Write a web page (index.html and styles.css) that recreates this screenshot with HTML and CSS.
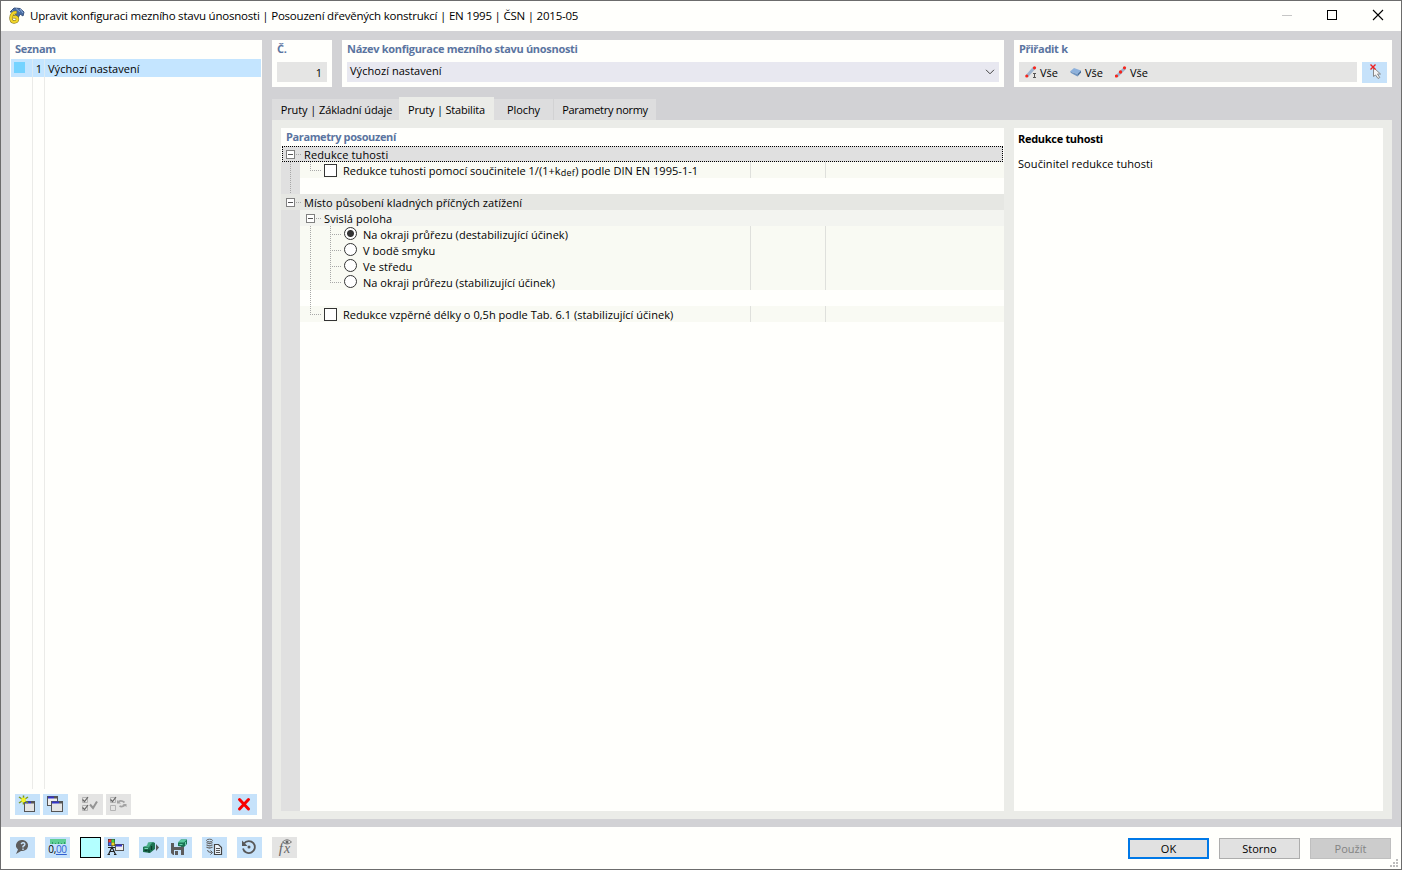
FILE: index.html
```html
<!DOCTYPE html>
<html lang="cs">
<head>
    <meta charset="UTF-8">
    <title>Upravit konfiguraci mezního stavu únosnosti</title>
    <link rel="stylesheet" href="styles.css">
</head>
<body>
    <div class="window">
        <header class="titlebar">
            <svg class="app-icon" width="17" height="17" viewBox="0 0 17 17">
                <path d="M2 5 L6 1 L12 1.500 L16 5 L15 9 L12 7 L10 11 L6 5 Z" fill="#4a6da3" stroke="#3a5580"/>
                <path d="M4 3.500 L8 6 M8 1.500 L12 5 M12 2 L15 6" stroke="#8fb0dc"/>
                <path d="M8.500 5.500 Q3.500 5 3 11 Q3 15 6 15 Q9.500 15 9.500 12 Q9 9 5 10" fill="none" stroke="#8d7c1c" stroke-width="3.400"/>
                <path d="M8.500 5.500 Q3.500 5 3 11 Q3 15 6 15 Q9.500 15 9.500 12 Q9 9 5 10" fill="none" stroke="#f2d62a" stroke-width="2.200"/>
            </svg>
            <span class="title">Upravit konfiguraci mezního stavu únosnosti | Posouzení dřevěných konstrukcí | EN 1995 | ČSN | 2015-05</span>
            <svg class="controls" width="104" height="12" viewBox="0 0 104 12">
                <path d="M0 6.500H10" stroke="#c6c6c6"/>
                <rect x="45.500" y="1.500" width="9" height="9" fill="none" stroke="#000"/>
                <path d="M91 1 L101 11 M101 1 L91 11" stroke="#000" stroke-width="1.100"/>
            </svg>
        </header>

        <main class="content">
            <aside class="list panel">
                <h2 class="heading">Seznam</h2>
                <div class="list-row">
                    <span class="list-color"><i></i></span>
                    <span class="list-no">1</span>
                    <span class="list-name">Výchozí nastavení</span>
                </div>
                <div class="list-empty"></div>
                <div class="list-tools">
                    <button class="tool">
                        <svg width="25" height="21" viewBox="0 0 25 21">
                            <rect x="9.500" y="7.500" width="10" height="10" fill="#e4e4e4" stroke="#555"/>
                            <path d="M10 8.500H16" stroke="#3434c8" stroke-width="2"/>
                            <path d="M16 8.500H20" stroke="#555" stroke-width="2"/>
                            <path d="M8.500 1.500V10.500M4 3L13 9M4 9L13 3" stroke="#7d9a18" stroke-width="1.500"/>
                            <circle cx="8.500" cy="6" r="2.400" fill="#f4f428"/>
                        </svg>
                    </button>
                    <button class="tool">
                        <svg width="25" height="21" viewBox="0 0 25 21">
                            <rect x="4.500" y="2.500" width="10" height="9" fill="#eee" stroke="#555"/>
                            <path d="M5 3.500H11" stroke="#3434c8" stroke-width="2"/>
                            <path d="M11 3.500H15" stroke="#555" stroke-width="2"/>
                            <rect x="8.500" y="7.500" width="11" height="10" fill="#e4e4e4" stroke="#555"/>
                            <path d="M9 8.500H16" stroke="#3434c8" stroke-width="2"/>
                            <path d="M16 8.500H20" stroke="#555" stroke-width="2"/>
                        </svg>
                    </button>
                    <button class="tool off gap">
                        <svg width="25" height="21" viewBox="0 0 25 21" fill="none">
                            <path d="M4.500 3.500h5v5h-5zM4.500 11.500h5v5h-5z" stroke="#b4b4b4"/>
                            <path d="M4.500 5.500l2 2 3.500-4.500M4.500 13.500l2 2 3.500-4.500" stroke="#666" stroke-width="1.200"/>
                            <path d="M12 10.500l3 3.500 4-6.500" stroke="#949494" stroke-width="2"/>
                        </svg>
                    </button>
                    <button class="tool off">
                        <svg width="25" height="21" viewBox="0 0 25 21" fill="none">
                            <path d="M4.500 3.500h5v5h-5zM4.500 11.500h5v5h-5z" stroke="#b4b4b4"/>
                            <path d="M4.500 5.500l2 2 3.500-4.500" stroke="#666" stroke-width="1.200"/>
                            <path d="M12.500 7.500q3-1.500 6 1M19 11q-3 2.500-5.500 1" stroke="#a2a2a2" stroke-width="1.700"/>
                            <path d="M11 6v3.500h4zM20.500 13v-3h-4z" fill="#a2a2a2"/>
                        </svg>
                    </button>
                    <button class="tool last">
                        <svg width="25" height="21" viewBox="0 0 25 21">
                            <path d="M7.500 5.500L16.500 15M16.500 5.500L7.500 15" stroke="#f80000" stroke-width="3" stroke-linecap="round"/>
                        </svg>
                    </button>
                </div>
            </aside>

            <section class="right">
                <div class="top">
                    <div class="panel number">
                        <h2 class="heading">Č.</h2>
                        <div class="field num-field">1</div>
                    </div>
                    <div class="panel name">
                        <h2 class="heading">Název konfigurace mezního stavu únosnosti</h2>
                        <div class="field combo">
                            <span>Výchozí nastavení</span>
                            <svg width="10" height="6" viewBox="0 0 10 6"><path d="M1 .8L5 4.800 9 .8" fill="none" stroke="#444"/></svg>
                        </div>
                    </div>
                    <div class="panel assign">
                        <h2 class="heading">Přiřadit k</h2>
                        <div class="assign-row">
                            <div class="field assign-field">
                                <svg width="13" height="12" viewBox="0 0 13 12">
                                    <path d="M2 10L9 2" stroke="#9db4d0" stroke-width="3"/>
                                    <circle cx="1.800" cy="10" r="1.600" fill="#f5261c"/><circle cx="9.500" cy="1.800" r="1.600" fill="#f5261c"/>
                                    <path d="M8 7.500h3M8 11.500h3M9.500 7.500v4" stroke="#555"/>
                                </svg>
                                <span>Vše</span>
                                <svg width="13" height="12" viewBox="0 0 13 12">
                                    <path d="M0 5.500L4 2 11 4.500 7.500 8Z" fill="#8db1dc"/>
                                    <path d="M0 5.500L7.500 8V10.500L1 7Z" fill="#6f95c2"/>
                                    <path d="M7.500 8L11 4.500V6.500L7.500 10.500Z" fill="#47709f"/>
                                </svg>
                                <span>Vše</span>
                                <svg width="13" height="12" viewBox="0 0 13 12">
                                    <path d="M2 10L10 2" stroke="#9db4d0" stroke-width="3"/>
                                    <circle cx="1.500" cy="10" r="1.600" fill="#f5261c"/><circle cx="5.500" cy="6" r="1.700" fill="#f5261c"/><circle cx="9.500" cy="1.800" r="1.600" fill="#f5261c"/>
                                </svg>
                                <span>Vše</span>
                            </div>
                            <button class="tool">
                                <svg width="25" height="21" viewBox="0 0 25 21">
                                    <path d="M11.500 5.500V14.500l2-1.500 2.500 3.500 1.800-1-2.300-3.500h3z" fill="#f4f4f4" stroke="#888"/>
                                    <path d="M8.500 2.500l5 5M13.500 2.500l-5 5" stroke="#f02020" stroke-width="1.400"/>
                                </svg>
                            </button>
                        </div>
                    </div>
                </div>

                <nav class="tabs">
                    <span class="tab tab-basic">Pruty | Základní údaje</span>
                    <span class="tab tab-stability active">Pruty | Stabilita</span>
                    <span class="tab tab-surfaces">Plochy</span>
                    <span class="tab tab-norm">Parametry normy</span>
                </nav>

                <div class="page">
                    <div class="panel params">
                        <h2 class="heading">Parametry posouzení</h2>
                        <div class="tree">
                            <div class="row group selected"><i class="box"></i><span>Redukce tuhosti</span></div>
                            <div class="row item"><i class="cell gutter v"></i><i class="cell l"></i><i class="check"></i><span>Redukce tuhosti pomocí součinitele 1/(1+k<small>def</small>) podle DIN EN 1995-1-1</span></div>
                            <div class="row"><i class="cell gutter v"></i></div>
                            <div class="row group"><i class="box"></i><span>Místo působení kladných příčných zatížení</span></div>
                            <div class="row sub"><i class="cell gutter"></i><i class="box"></i><span>Svislá poloha</span></div>
                            <div class="row item"><i class="cell gutter"></i><i class="cell v"></i><i class="cell t"></i><i class="radio on"></i><span>Na okraji průřezu (destabilizující účinek)</span></div>
                            <div class="row item"><i class="cell gutter"></i><i class="cell v"></i><i class="cell t"></i><i class="radio"></i><span>V bodě smyku</span></div>
                            <div class="row item"><i class="cell gutter"></i><i class="cell v"></i><i class="cell t"></i><i class="radio"></i><span>Ve středu</span></div>
                            <div class="row item"><i class="cell gutter"></i><i class="cell v"></i><i class="cell l"></i><i class="radio"></i><span>Na okraji průřezu (stabilizující účinek)</span></div>
                            <div class="row"><i class="cell gutter"></i><i class="cell v"></i></div>
                            <div class="row item"><i class="cell gutter"></i><i class="cell l"></i><i class="check"></i><span>Redukce vzpěrné délky o 0,5h podle Tab. 6.1 (stabilizující účinek)</span></div>
                            <div class="tree-rest"></div>
                        </div>
                    </div>
                    <div class="panel info">
                        <h3>Redukce tuhosti</h3>
                        <p>Součinitel redukce tuhosti</p>
                    </div>
                </div>
            </section>
        </main>

        <footer class="footer">
            <button class="tool">
                <svg width="25" height="21" viewBox="0 0 25 21">
                    <path d="M13 3a6 5.500 0 1 1-2 11L6 17 8 12.500A6 5.500 0 0 1 13 3z" fill="#5d5d5d"/>
                    <path d="M11 7q2-2 3.600-.6 1 1.600-1.600 3v1M13 11.500v1.500" fill="none" stroke="#c6e2fa" stroke-width="1.400"/>
                </svg>
            </button>
            <button class="tool units">
                <svg width="16" height="5" viewBox="0 0 16 5"><rect width="16" height="5" fill="#5fce96"/><path d="M2.500 3v2M5.500 4v1M8.500 3v2M11.500 4v1M14.500 3v2" stroke="#2f9e66"/></svg>
                <span>0,<u>00</u></span>
            </button>
            <span class="color-box"></span>
            <button class="tool">
                <svg width="25" height="21" viewBox="0 0 25 21">
                    <rect x="4" y="2" width="7" height="7" fill="#333"/>
                    <path d="M4.500 2.500h3v3h-3z" fill="#f03030"/><path d="M7.500 2.500h3v3h-3z" fill="#40d840"/><path d="M4.500 5.500h3v3h-3z" fill="#4060f0"/><path d="M7.500 5.500h3v3h-3z" fill="#f0d820"/>
                    <path d="M4.500 17.500L8 10 11.500 17.500M6 14.500h4M4 10.500h8M3.500 17.500h2.500M10 17.500h2.500" fill="none" stroke="#222" stroke-width="1.200"/>
                    <rect x="11.500" y="7.500" width="8" height="6" fill="#eee" stroke="#555"/>
                    <path d="M12 8.500h6" stroke="#3434c8" stroke-width="2"/>
                </svg>
            </button>
            <button class="tool gap">
                <svg width="25" height="21" viewBox="0 0 25 21">
                    <path d="M4 10L9 8.500V6L14 5 16 6V12L11 16 4 15Z" fill="#1d7353"/>
                    <path d="M4 10L8 8.500 9 5.500 14 5 11.500 7.500 10 10.500Z" fill="#4aae88"/>
                    <path d="M5.500 13.500h3M12.500 9v4M10 12.500v3" stroke="#0a3d2a" stroke-width="1.300"/>
                    <path d="M5.500 11.500h3.500" stroke="#78d9b4"/>
                    <path d="M17 7v7l3-3.500z" fill="#555"/>
                </svg>
            </button>
            <button class="tool">
                <svg width="25" height="21" viewBox="0 0 25 21">
                    <path d="M4 6h13v12H6l-2-2z" fill="#5b5b5b"/>
                    <path d="M7 6h7v4H7zM7 13h7v5H7z" fill="#c6e2fa"/><path d="M8 14h3v4H8z" fill="#5b5b5b"/>
                    <path d="M11 5.500L14 2.500 20 2.500V7L17 10 11 9Z" fill="#187553"/>
                    <path d="M11 5.500L14 2.500 20 2.500 17 5.500Z" fill="#5aca9f"/>
                    <path d="M12.500 7.500h3M18.500 5v3" stroke="#6ad0aa" stroke-width="1"/>
                </svg>
            </button>
            <button class="tool gap">
                <svg width="25" height="21" viewBox="0 0 25 21" fill="none">
                    <ellipse cx="7.500" cy="3.500" rx="3" ry="1.300" stroke="#666"/>
                    <path d="M4.500 5.500q3 2 6 0M4.500 7.800q3 2 6 0M4.500 10q3 2 6 0" stroke="#666" stroke-width="1.300"/>
                    <path d="M5.500 13q0 2.500 4 2.500M8.500 13.500l2 2-2 2" stroke="#555"/>
                    <path d="M12.500 7.500h4l3 3v7h-7z" fill="#eef5fc" stroke="#444" stroke-width="1.200"/>
                    <path d="M14 11.500h4M14 13.500h4M14 15.500h4" stroke="#555"/>
                </svg>
            </button>
            <button class="tool gap">
                <svg width="25" height="21" viewBox="0 0 25 21">
                    <path d="M7 6.500A6 6 0 1 1 6 11.500" fill="none" stroke="#585858" stroke-width="1.800"/>
                    <path d="M5 3.500v5.500H10.500z" fill="#585858"/><circle cx="12" cy="10" r="1.500" fill="#585858"/>
                </svg>
            </button>
            <button class="tool off gap formula">
                <span>f</span><span class="x">x</span>
                <svg width="10" height="6" viewBox="0 0 10 6"><path d="M.5 3Q5-1.500 9.500 3 5 7 .5 3z" fill="none" stroke="#777"/><circle cx="5" cy="3" r="1.500" fill="#666"/></svg>
            </button>
            <div class="dialog-buttons">
                <button class="btn ok">OK</button>
                <button class="btn">Storno</button>
                <button class="btn disabled">Použít</button>
            </div>
            <svg class="grip" width="8" height="8" viewBox="0 0 8 8"><path d="M6 0h2v2H6zM3 3h2v2H3zM6 3h2v2H6zM0 6h2v2H0zM3 6h2v2H3zM6 6h2v2H6z" fill="#bdbdbd"/></svg>
        </footer>
    </div>
</body>
</html>
```
FILE: styles.css
```css
* {
    box-sizing: border-box;
}
body {
    margin: 0;
    font: 11px/16px "Open Sans", "Noto Sans", sans-serif;
    color: #000;
}
h2, h3, p {
    margin: 0;
    font-size: 11px;
}
h2, h3 {
    letter-spacing: -0.3px;
}
button {
    font: inherit;
    padding: 0;
    border: 0;
}
svg {
    display: block;
    flex: none;
}
.window {
    width: 1402px;
    height: 870px;
    border: 1px solid #6c6c6c;
    background-color: #fffffc;
    display: flex;
    flex-direction: column;
    overflow: hidden;
    white-space: nowrap;
}
.titlebar {
    height: 30px;
    flex: none;
    display: flex;
    align-items: center;
    padding: 0 15px 0 7px;
}
.app-icon {
    margin-top: -2px;
}
.title {
    margin-left: 5px;
    font-size: 11.5px;
    letter-spacing: -0.218px;
}
.controls {
    margin: -2px 0 0 auto;
}
.content {
    height: 796px;
    flex: none;
    background-color: #d2d2d5;
    padding: 9px 9px 8px;
    display: flex;
    gap: 10px;
}
.panel {
    background-color: #fffffc;
}
.heading {
    height: 19px;
    padding-left: 5px;
    line-height: 17px;
    color: #5a74a0;
}

/* list on the left */
.list {
    width: 252px;
    display: flex;
    flex-direction: column;
}
.list-row {
    height: 18px;
    margin: 0 1px;
    background-color: #c4e5ff;
    display: flex;
    line-height: 19px;
}
.list-color {
    width: 22px;
    padding: 3px;
    border-right: 1px solid #dcebf4;
}
.list-color i {
    display: block;
    width: 11px;
    height: 11px;
    background-color: #75d3ff;
}
.list-no {
    width: 12px;
    text-align: right;
    padding-right: 2px;
    border-right: 1px solid #dcebf4;
}
.list-name {
    padding-left: 3px;
    letter-spacing: 0.05px;
}
.list-empty {
    height: 712px;
    width: 35px;
    margin-bottom: 5px;
    border-right: 1px solid #ebebe8;
    background: linear-gradient(#ebebe8, #ebebe8) 22px 0 / 1px 100% no-repeat;
}
.list-tools {
    display: flex;
    gap: 3px;
    padding: 0 5px;
}
.tool {
    width: 25px;
    height: 21px;
    flex: none;
    background-color: #c6e2fa;
}
.tool.off {
    background-color: #e4e4e3;
}
.tool.gap {
    margin-left: 7px;
}
.tool.last {
    margin-left: auto;
}

/* header fields */
.right {
    width: 1120px;
    display: flex;
    flex-direction: column;
}
.top {
    display: flex;
    gap: 10px;
    height: 47px;
}
.top .heading {
    height: 22px;
}
.number {
    width: 60px;
}
.name {
    width: 662px;
}
.assign {
    width: 378px;
}
.field {
    height: 20px;
    margin: 0 5px;
    background-color: #e5e5e4;
    line-height: 21px;
}
.num-field {
    text-align: right;
    padding-right: 5px;
}
.combo {
    background-color: #e8e8f0;
    display: flex;
    align-items: center;
    justify-content: space-between;
    padding: 0 4px 0 3px;
    letter-spacing: 0.05px;
}
.combo span {
    line-height: 16px;
    padding-bottom: 2px;
}
.assign-row {
    display: flex;
}
.assign-field {
    width: 338px;
    display: flex;
    align-items: center;
    padding-left: 6px;
}
.assign-field span {
    width: 32px;
    padding-left: 2px;
}

/* tabs */
.tabs {
    height: 33px;
    padding-top: 10px;
    display: flex;
    align-items: flex-end;
    letter-spacing: -0.1px;
}
.tab {
    height: 21px;
    line-height: 22px;
    background-color: #ddddde;
    text-align: center;
}
.tab.active {
    height: 23px;
    line-height: 25px;
    background-color: #ebece8;
}
.tab-basic {
    width: 127px;
    padding-left: 2px;
}
.tab-stability {
    width: 95px;
    letter-spacing: -0.2px;
}
.tab-surfaces {
    width: 60px;
    border-right: 1px solid #d2d2d3;
}
.tab-norm {
    width: 102px;
    letter-spacing: -0.3px;
}
.page {
    height: 699px;
    background-color: #ebece8;
    padding: 8px 9px;
    display: flex;
    gap: 10px;
}

/* parameter tree */
.params {
    width: 723px;
    display: flex;
    flex-direction: column;
}
.params .heading {
    height: 18px;
    letter-spacing: -0.38px;
}
.tree {
    flex: 1;
    display: flex;
    flex-direction: column;
    letter-spacing: 0.03px;
}
.tree-rest {
    flex: 1;
    width: 19px;
    background-color: #e0e0e0;
}
.row {
    height: 16px;
    display: flex;
    line-height: 18px;
}
.row.item {
    background: linear-gradient(#dfe0dc, #dfe0dc) 469px 0 / 1px 100% no-repeat,
        linear-gradient(#dfe0dc, #dfe0dc) 544px 0 / 1px 100% no-repeat #f9faf3;
}
.row.group {
    background-color: #e6e7e3;
    letter-spacing: 0.06px;
}
.row.sub {
    background-color: #f3f4f0;
    letter-spacing: 0.1px;
}
.row.selected {
    background-color: #e0e0e0;
    border: 1px dotted #000;
    margin: 0 1px;
    line-height: 16px;
    letter-spacing: 0.12px;
}
.row.selected .box {
    margin: 3px 9px 0 3px;
}
.cell {
    width: 20px;
    flex: none;
    background-repeat: no-repeat;
}
.gutter {
    width: 19px;
    margin-right: 1px;
    background-color: #e0e0e0;
}
.v, .t {
    background-image: repeating-linear-gradient(#a8a8a8 0 1px, transparent 1px 2px);
    background-size: 1px 16px;
    background-position: 9px 0;
}
.t, .l {
    background-image: repeating-linear-gradient(#a8a8a8 0 1px, transparent 1px 2px),
        repeating-linear-gradient(90deg, #a8a8a8 0 1px, transparent 1px 2px);
    background-size: 1px 16px, 11px 1px;
    background-position: 9px 0, 9px 8px;
}
.l {
    background-size: 1px 9px, 11px 1px;
}
.box {
    position: relative;
    width: 9px;
    height: 9px;
    margin: 4px 9px 0 5px;
    flex: none;
    border: 1px solid #808080;
    background: linear-gradient(#555, #555) center / 5px 1px no-repeat #fff;
}
.box::after {
    content: "";
    position: absolute;
    left: 9px;
    top: 3px;
    width: 6px;
    height: 1px;
    background: repeating-linear-gradient(90deg, #a8a8a8 0 1px, transparent 1px 2px);
}
.check, .radio {
    width: 13px;
    height: 13px;
    flex: none;
    margin: 2px 6px 0 3px;
    border: 1px solid #333;
    background-color: #fff;
}
.radio {
    margin-top: 1px;
    border-radius: 50%;
}
.radio.on {
    background: radial-gradient(circle, #333 3px, #fff 4px);
}
small {
    font-size: 9px;
    line-height: 1;
    vertical-align: -1px;
    letter-spacing: 0.3px;
}
.info {
    width: 369px;
    padding: 3px 4px;
}
.info p {
    margin-top: 9px;
    letter-spacing: 0.08px;
}

/* bottom bar */
.footer {
    flex: 1;
    display: flex;
    gap: 3px;
    padding: 10px 3px 0 9px;
}
.units {
    margin: 0 7px;
    padding: 2px 4px 0;
    display: flex;
    flex-direction: column;
    align-items: center;
    font-size: 10px;
    line-height: 11px;
    letter-spacing: -0.3px;
}
.units u {
    color: #2f5fd0;
}
.color-box {
    width: 21px;
    height: 21px;
    border: 1px solid #000;
    background-color: #b3ffff;
}
.formula {
    position: relative;
    font: italic 15px/22px "Liberation Serif", serif;
    color: #666;
}
.formula .x {
    margin-left: 1px;
    font-size: 14px;
}
.formula svg {
    position: absolute;
    right: 5px;
    top: 2px;
}
.dialog-buttons {
    margin: 1px 1px 0 auto;
    display: flex;
    gap: 10px;
}
.btn {
    width: 81px;
    height: 21px;
    background-color: #e1e1e1;
    border: 1px solid #adadad;
    line-height: 20px;
}
.btn.ok {
    border: 2px solid #0078e7;
    line-height: 18px;
}
.btn.disabled {
    background-color: #ccc;
    border-color: #bfbfbf;
    color: #838383;
}
.grip {
    margin: 22px 0 0 -5px;
}
```
